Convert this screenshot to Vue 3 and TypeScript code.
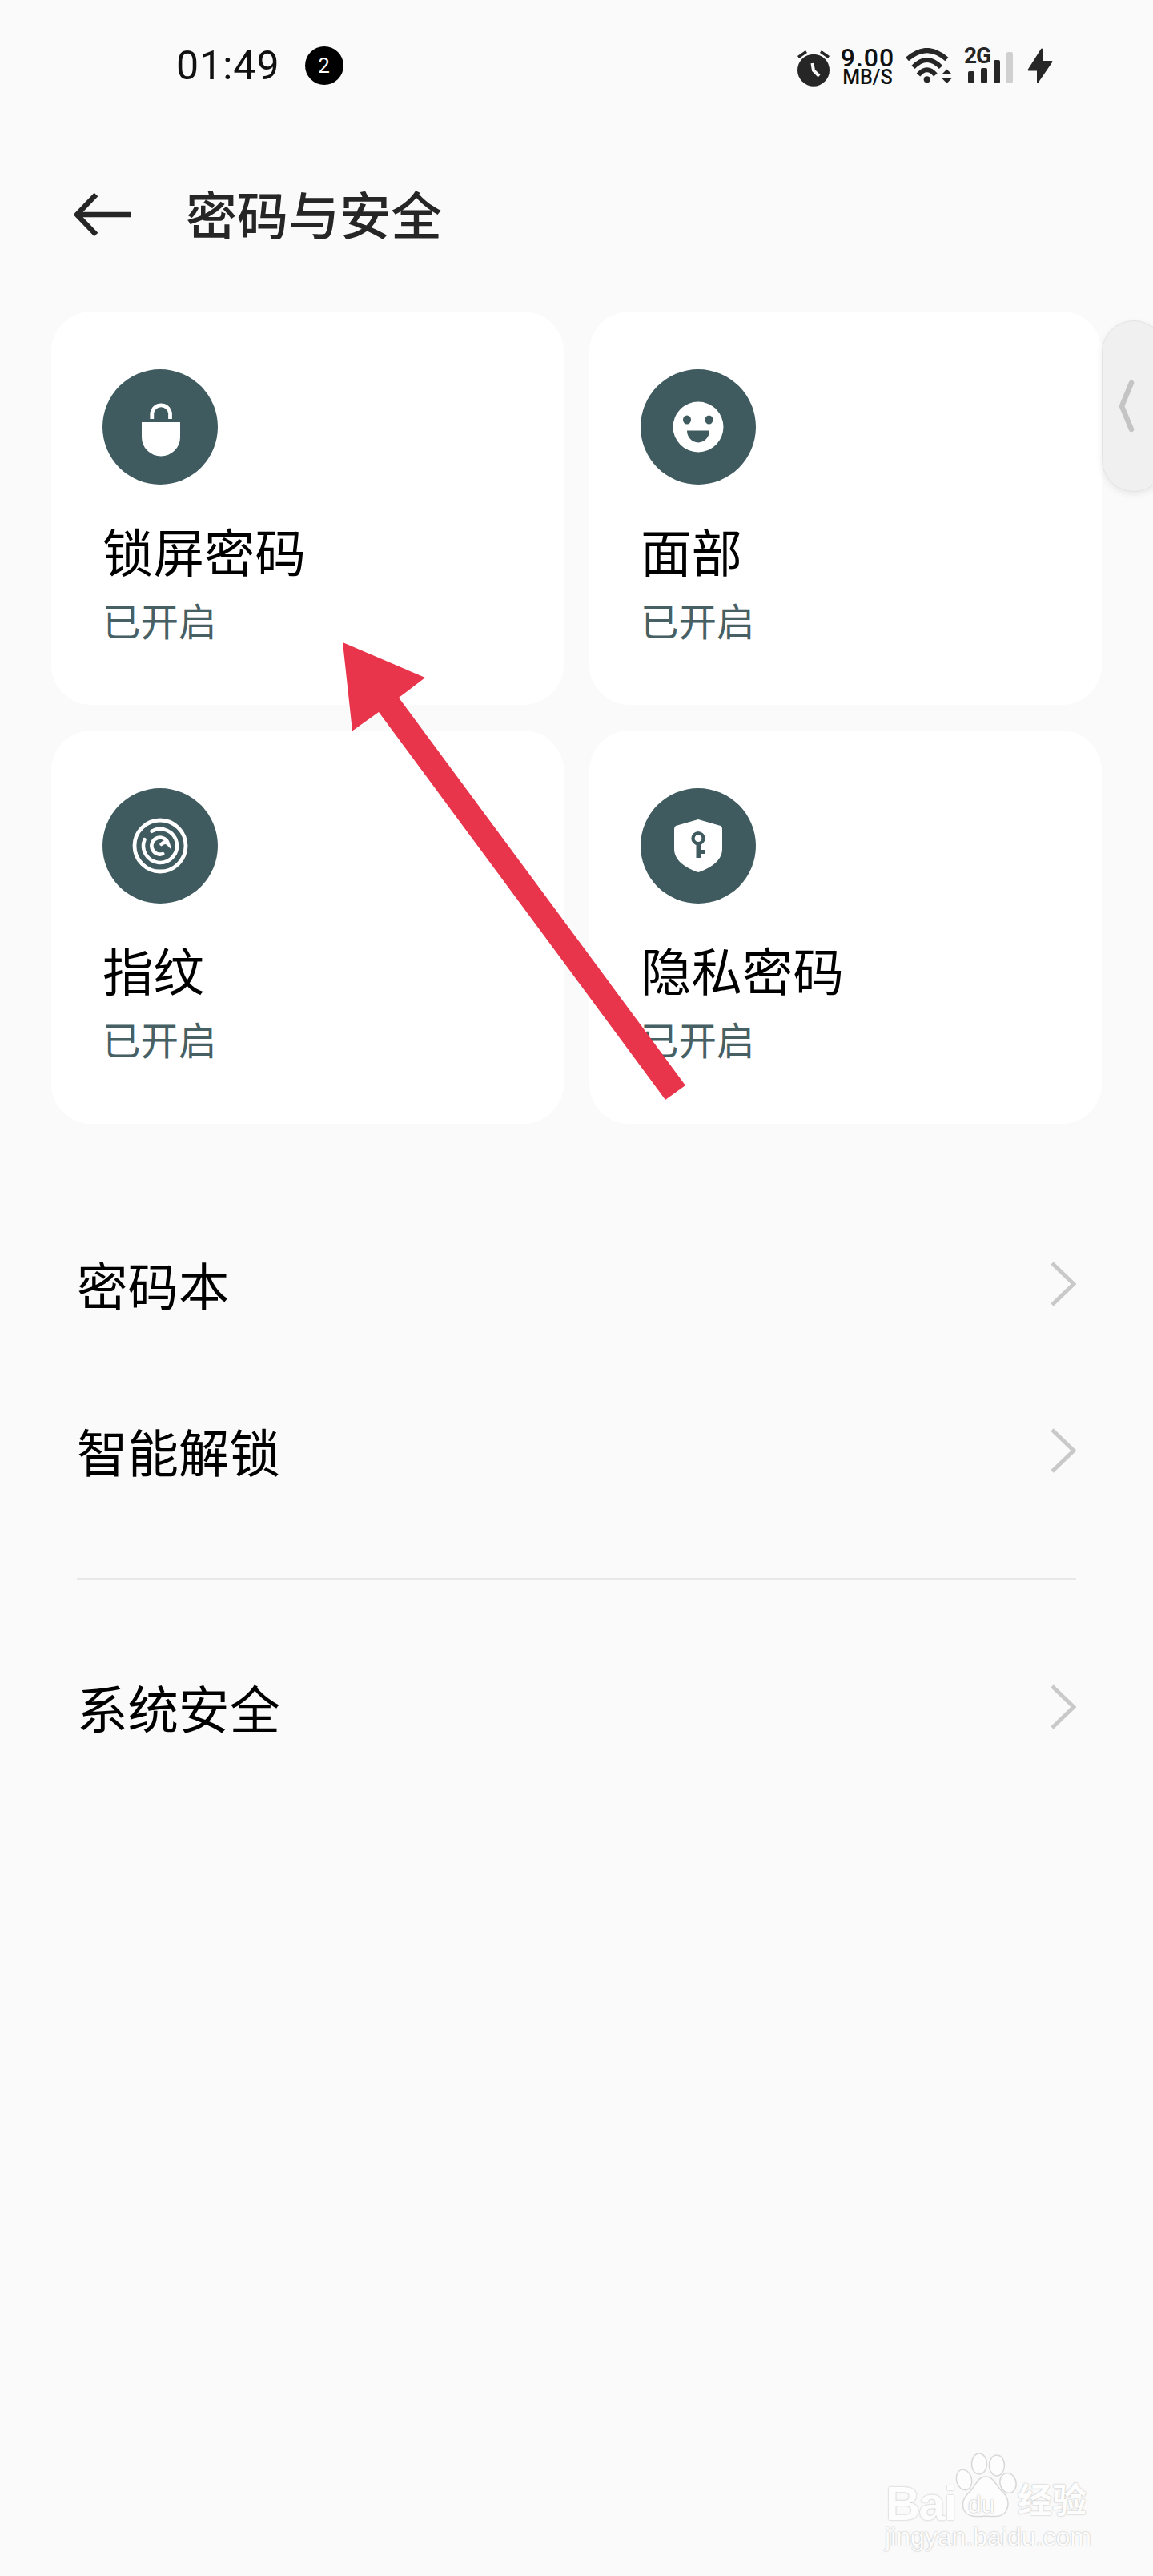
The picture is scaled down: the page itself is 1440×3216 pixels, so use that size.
<script setup lang="ts">
const cards = [
  { key: 'lock', title: '锁屏密码', sub: '已开启' },
  { key: 'face', title: '面部', sub: '已开启' },
  { key: 'print', title: '指纹', sub: '已开启' },
  { key: 'shield', title: '隐私密码', sub: '已开启' },
]
const topRows = ['密码本', '智能解锁']
</script>

<template>
  <div class="page">
    <div class="status">
      <span class="time">01:49</span>
      <span class="badge">2</span>
      <div class="status-right">
        <svg class="ic-alarm" width="40" height="46" viewBox="0 0 40 46">
          <circle cx="20" cy="25.7" r="20" fill="#262626" />
          <path d="M1 9.500 11 2.500M29 2.500 39 9.500" stroke="#262626" stroke-width="3.500" fill="none" />
          <path d="M18.500 17 20 26 27 33" stroke="#fafafa" stroke-width="4" fill="none" />
        </svg>
        <div class="speed">
          <span class="speed-num">9.00</span>
          <span class="speed-unit">MB/S</span>
        </div>
        <svg width="58" height="44" viewBox="0 0 58 44">
          <g fill="none" stroke="#262626" stroke-width="6">
            <path d="M2 14Q26.700-8 51.400 14" />
            <path d="M9.500 24Q26.700 6 44 24" />
            <path d="M16 33.500Q26.700 21 37.400 33.500" />
          </g>
          <circle cx="26.700" cy="39.300" r="4" fill="#262626" />
          <path d="M51.500 26.500 45 33H58ZM45 37.500H58L51.500 44Z" fill="#262626" />
        </svg>
        <div class="signal">
          <span class="gen">2G</span>
          <div class="bars">
            <i class="bar" style="height: 15px" />
            <i class="bar" style="height: 19px" />
            <i class="bar" style="height: 29px" />
            <i class="bar off" style="height: 39px" />
          </div>
        </div>
        <svg class="ic-bolt" width="32" height="44" viewBox="0 0 32 44">
          <path d="M18 1.500 1.500 27.500H13V42.500L30.500 17H18.500Z" fill="#262626" stroke="#262626" stroke-width="2" stroke-linejoin="round" />
        </svg>
      </div>
    </div>

    <div class="header">
      <svg class="back" width="70" height="54" viewBox="0 0 70 54">
        <path d="M27 2 3 27 27 52M3 27H70" fill="none" stroke="#262626" stroke-width="6.500" />
      </svg>
      <span class="head-title">密码与安全</span>
    </div>

    <div class="grid">
      <div v-for="c in cards" :key="c.key" class="card">
        <div class="circle">
          <svg width="144" height="144" viewBox="0 0 144 144">
            <template v-if="c.key === 'lock'">
              <path d="M49 66H97V85A24 23.500 0 0 1 49 85Z" fill="#fff" />
              <path d="M61.800 62V54.500A11.500 11.500 0 0 1 84.500 54.500V62" fill="none" stroke="#fff" stroke-width="4.800" />
            </template>
            <template v-else-if="c.key === 'face'">
              <circle cx="72" cy="72" r="31.500" fill="#fff" />
              <ellipse cx="58" cy="63" rx="5" ry="5.500" fill="#3f5b5f" />
              <ellipse cx="85.500" cy="63" rx="5" ry="5.500" fill="#3f5b5f" />
              <path d="M58 76.500H86A14 15 0 0 1 58 76.500Z" fill="#3f5b5f" />
            </template>
            <template v-else-if="c.key === 'print'">
              <g fill="none" stroke="#fff" stroke-linecap="round">
                <circle cx="72" cy="72" r="32" stroke-width="4.800" />
                <path d="M61.500 53.800A21 21 0 1 1 52.600 64" stroke-width="4.500" />
                <path d="M75.300 82A10.500 10.500 0 1 1 82 69.500Q78 65.500 73.500 70" stroke-width="4.500" />
              </g>
            </template>
            <template v-else>
              <path d="M72 39 100 47Q102 48 102 51V76C102 92 84 101 72 105 60 101 42 92 42 76V51Q42 48 44 47Z" fill="#fff" />
              <circle cx="72" cy="62.700" r="6.500" fill="none" stroke="#3f5b5f" stroke-width="4.300" />
              <path d="M69.500 68H75V87H69.500ZM75 77H80V82H75Z" fill="#3f5b5f" />
            </template>
          </svg>
        </div>
        <div class="card-title">{{ c.title }}</div>
        <div class="card-sub">{{ c.sub }}</div>
      </div>
    </div>

    <div class="list">
      <div v-for="r in topRows" :key="r" class="row">
        <span class="row-text">{{ r }}</span>
        <svg width="32" height="56" viewBox="0 0 32 56">
          <path d="M2 2 29 28 2 54" fill="none" stroke="#c9c9c9" stroke-width="5" />
        </svg>
      </div>
      <div class="divider" />
      <div class="row">
        <span class="row-text">系统安全</span>
        <svg width="32" height="56" viewBox="0 0 32 56">
          <path d="M2 2 29 28 2 54" fill="none" stroke="#c9c9c9" stroke-width="5" />
        </svg>
      </div>
    </div>

    <div class="side-tab">
      <svg width="20" height="66" viewBox="0 0 20 66">
        <path d="M16 4 4 33 16 62" fill="none" stroke="#c4c4c4" stroke-width="6.500" stroke-linecap="round" stroke-linejoin="round" />
      </svg>
    </div>

    <svg class="red-arrow" width="1440" height="1400" viewBox="0 0 1440 1400">
      <polygon points="428,802 531,846 498,871 856,1355 831,1373 473,889 440,912.500" fill="#e9354b" />
    </svg>

    <div class="mark">
      <span class="mark-bai">Bai</span>
      <svg class="mark-paw" width="84" height="90" viewBox="0 0 84 90">
        <g fill="#fdfdfd" stroke="#d8d8d8" stroke-width="1.500">
          <ellipse cx="32" cy="19" rx="9.500" ry="13" />
          <ellipse cx="54" cy="21" rx="9.500" ry="13" />
          <ellipse cx="13" cy="39" rx="9.500" ry="13" transform="rotate(-14 13 39)" />
          <ellipse cx="68" cy="43" rx="10" ry="12.500" transform="rotate(-14 68 43)" />
          <path d="M40 35C50 35 53 46 60 53 68 60 70 68 66 77 62 86 50 85 40 84 30 85 18 86 13 77 9 68 13 60 21 53 28 46 30 35 40 35Z" />
        </g>
      </svg>
      <span class="mark-du">du</span>
      <span class="mark-cn">经验</span>
      <span class="mark-url">jingyan.baidu.com</span>
    </div>
  </div>
</template>

<style scoped>
.page {
  position: relative;
  width: 1440px;
  height: 3216px;
  overflow: hidden;
  background: #fafafa;
  font-family: "Noto Sans CJK SC", "Noto Sans", sans-serif;
  color: #000;
}
.status {
  display: flex;
  align-items: center;
  height: 164px;
  padding: 0 125px 0 220px;
  box-sizing: border-box;
  font-family: Roboto, sans-serif;
  color: #262626;
}
.time { font-size: 50px; color: #111; letter-spacing: 1px; }
.badge {
  width: 48px;
  height: 48px;
  margin-left: 31px;
  border-radius: 50%;
  background: #000;
  color: #fff;
  font-size: 26px;
  line-height: 48px;
  text-align: center;
}
.status-right { display: flex; align-items: center; gap: 15px; margin-left: auto; }
.ic-alarm { margin-top: 5px; }
.ic-bolt { margin-left: 3px; }
.speed { display: flex; flex-direction: column; align-items: center; width: 65px; color: #111; }
.speed-num { font-size: 32px; font-weight: 500; line-height: 30px; letter-spacing: 1px; }
.speed-unit { font-size: 25px; font-weight: 500; line-height: 20px; }
.signal { position: relative; width: 61px; height: 44px; }
.gen {
  position: absolute;
  left: 0;
  top: -5px;
  font-size: 28px;
  font-weight: 700;
  letter-spacing: -1px;
  line-height: 30px;
}
.bars { position: absolute; left: 5px; bottom: 0; display: flex; align-items: flex-end; gap: 8px; }
.bar { display: block; width: 8px; border-radius: 2px; background: #262626; }
.bar.off { background: #d0d0d0; }
.header { display: flex; align-items: center; height: 208px; padding-left: 93px; }
.head-title {
  margin-left: 69px;
  padding-bottom: 6px;
  font-size: 64px;
  font-weight: 500;
  color: #262626;
  line-height: 1;
}
.grid {
  display: grid;
  grid-template-columns: 640px 640px;
  gap: 32px;
  margin-top: 17px;
  padding: 0 64px;
}
.card {
  height: 491px;
  box-sizing: border-box;
  padding: 72px 0 0 64px;
  border-radius: 50px;
  background: #fff;
}
.circle { width: 144px; height: 144px; border-radius: 50%; background: #3f5b5f; }
.circle svg { display: block; }
.card-title { margin-top: 45px; font-size: 63.500px; line-height: 72px; }
.card-sub { margin-top: 20px; font-size: 47.500px; line-height: 64px; color: #466064; }
.list { margin-top: 96px; padding: 0 96px; }
.row {
  display: flex;
  align-items: center;
  justify-content: space-between;
  height: 208px;
  font-size: 63.500px;
}
.row-text { padding-bottom: 3px; }
.divider { height: 2px; margin: 55px 0; background: #e8e8e8; }
.side-tab {
  position: absolute;
  left: 1376px;
  top: 400px;
  display: flex;
  align-items: center;
  width: 80px;
  height: 214px;
  box-sizing: border-box;
  padding-left: 20px;
  border: 1px solid #e4e4e4;
  border-radius: 46px;
  background: #f0f0f0;
  box-shadow: 0 3px 8px rgba(0, 0, 0, 0.08);
}
.red-arrow { position: absolute; left: 0; top: 0; }
.mark { position: absolute; left: 1100px; top: 3050px; width: 270px; height: 140px; }
.mark span { position: absolute; color: #fdfdfd; white-space: nowrap; line-height: 1; }
.mark-paw { position: absolute; left: 91px; top: 7px; }
.mark-bai {
  left: 6px;
  top: 46px;
  font-family: "Liberation Sans", sans-serif;
  font-size: 60px;
  font-weight: 700;
  letter-spacing: -2px;
  text-shadow: 0 0 2px #a8a8a8;
  height: 54px;
}
.mark-du {
  left: 109px;
  top: 62px;
  font-family: "Liberation Sans", sans-serif;
  font-size: 30px;
  text-shadow: 0 0 2px #a0a0a0;
}
.mark-cn {
  left: 171px;
  top: 47px;
  font-size: 43px;
  font-weight: 700;
  text-shadow: 0 0 2px #a8a8a8;
}
.mark-url {
  left: 5px;
  top: 101px;
  font-family: "Liberation Sans", sans-serif;
  font-size: 32px;
  text-shadow: 0 0 2px #a8a8a8;
}
</style>

<style>
html, body { background: #fafafa; }
</style>
